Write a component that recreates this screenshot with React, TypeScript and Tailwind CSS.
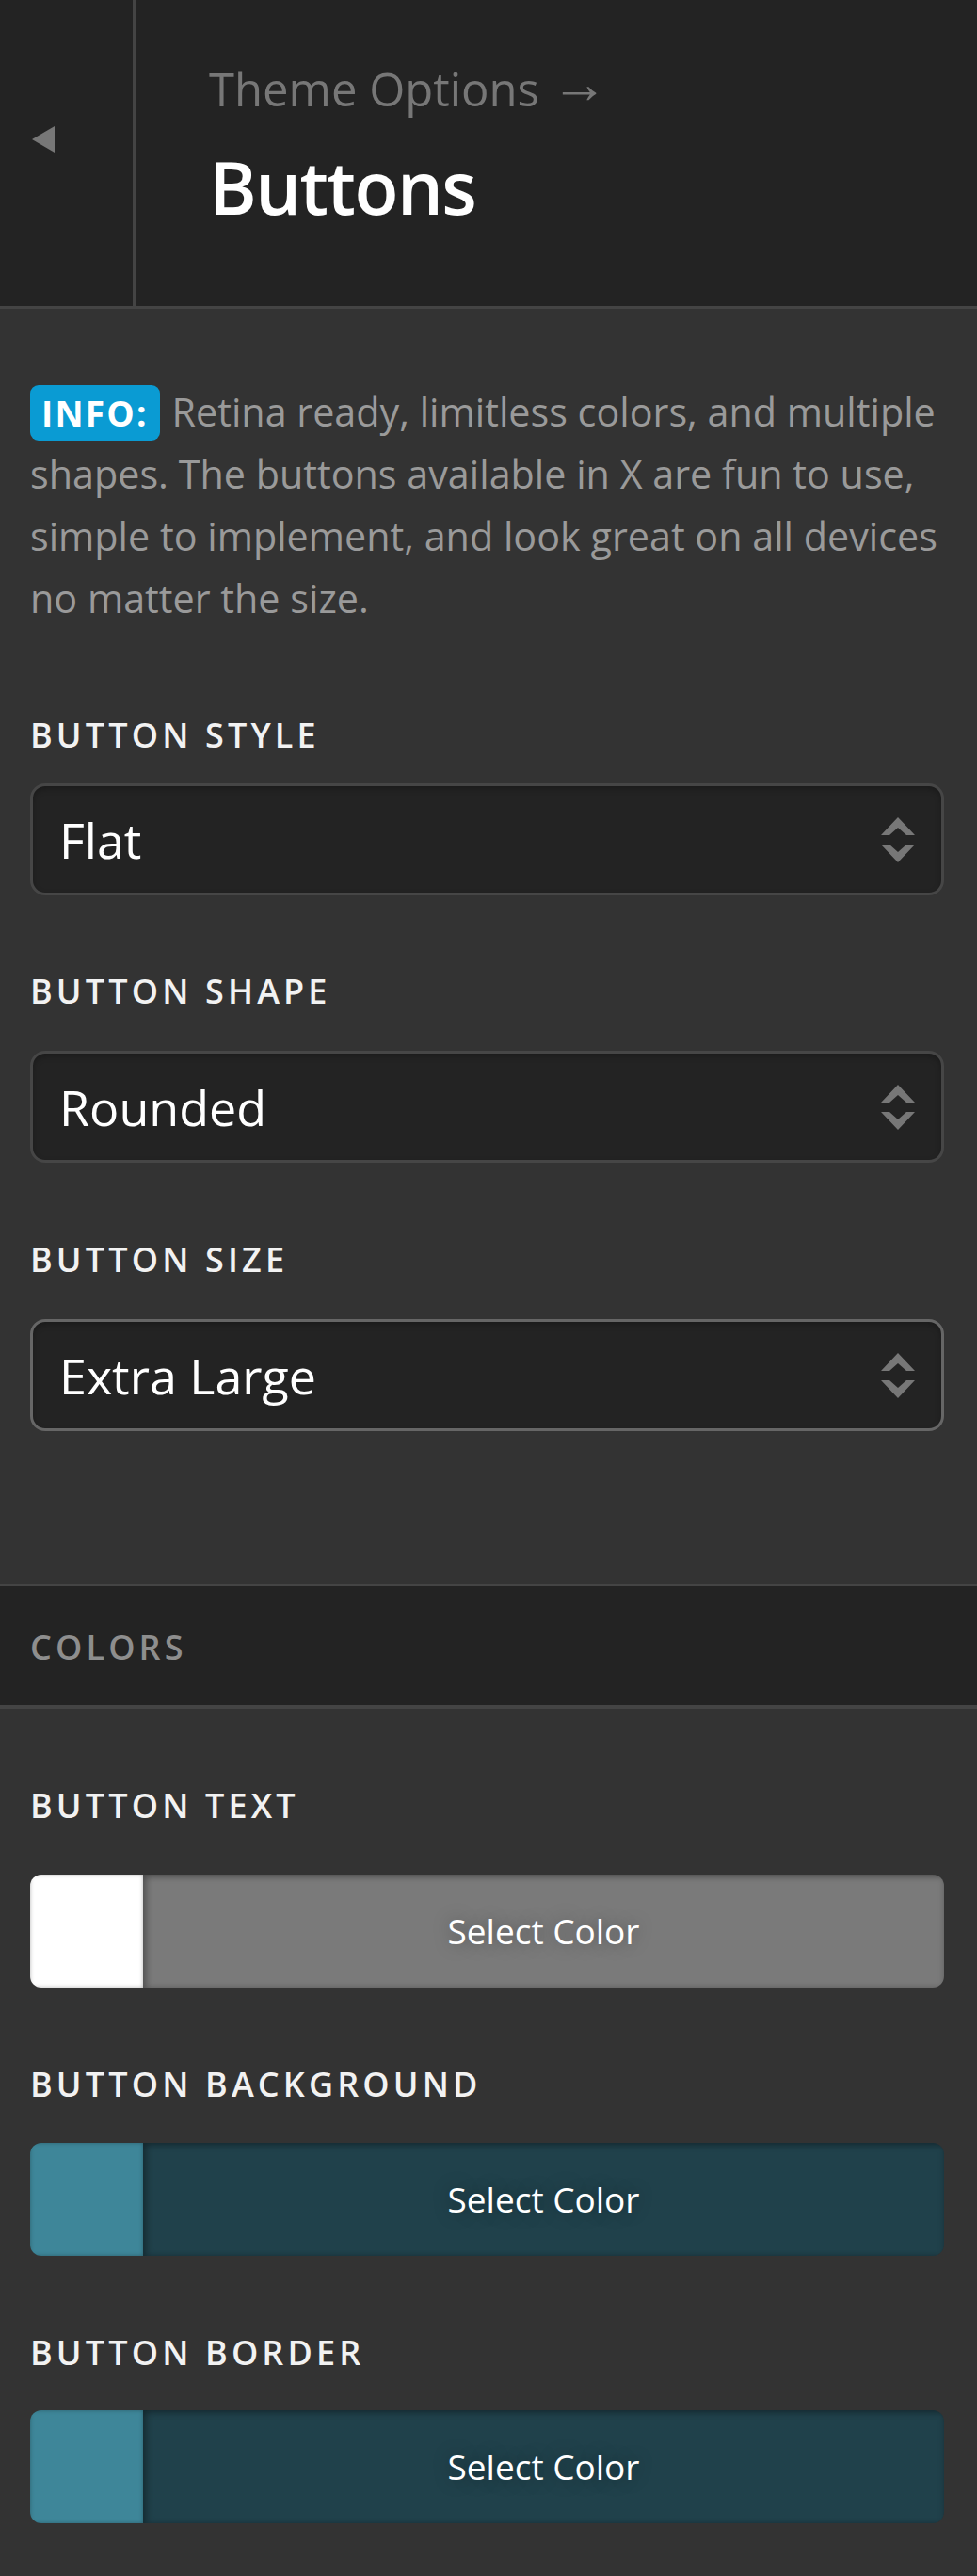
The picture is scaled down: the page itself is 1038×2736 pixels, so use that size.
import React from "react";

const font = { fontFamily: '"Open Sans", "Noto Sans", sans-serif' };

function Chevrons() {
  return (
    <svg width="36" height="48" viewBox="0 0 36 48" className="shrink-0">
      <polygon points="18,0 36,19 27,19 18,11 9,19 0,19" fill="#777777" />
      <polygon points="0,29 9,29 18,37 27,29 36,29 18,48" fill="#777777" />
    </svg>
  );
}

function Label({ children, className = "" }: { children: React.ReactNode; className?: string }) {
  return (
    <div className={`text-[36px] leading-[50px] font-semibold tracking-[0.115em] text-[#f2f2f2] ${className}`}>
      {children}
    </div>
  );
}

function Select({ value, focused = false, className = "" }: { value: string; focused?: boolean; className?: string }) {
  return (
    <div
      className={`flex items-center justify-between h-[119px] rounded-[16px] border-[3px] ${
        focused ? "border-[#666666]" : "border-[#464646]"
      } bg-[#232323] pl-[28px] pr-[28px] shadow-[inset_0_3px_6px_rgba(0,0,0,0.25)] ${className}`}
    >
      <span className="text-[52px] leading-[60px] text-white">{value}</span>
      <Chevrons />
    </div>
  );
}

function Picker({
  swatch,
  bar,
  className = "",
}: {
  swatch: string;
  bar: string;
  className?: string;
}) {
  return (
    <div className={`flex h-[120px] rounded-[12px] overflow-hidden ${className}`}>
      <div className={`w-[120px] ${swatch} shadow-[inset_0_0_4px_rgba(0,0,0,0.3)]`} />
      <div
        className={`flex-1 flex items-center justify-center ${bar} shadow-[inset_0_3px_6px_rgba(0,0,0,0.25),inset_5px_0_6px_rgba(0,0,0,0.2)]`}
      >
        <span className="text-[37px] leading-[50px] text-white [text-shadow:0_0_18px_rgba(0,0,0,0.35)]">
          Select Color
        </span>
      </div>
    </div>
  );
}

export default function App() {
  return (
    <div style={font} className="w-[1038px] min-h-[2736px] bg-[#333333]">
      {/* Header */}
      <div className="flex h-[328px] bg-[#232323] border-b-[3px] border-[#444444]">
        <div className="w-[144px] shrink-0 border-r-[3px] border-[#444444] pl-[34px] pt-[134px]">
          <svg width="24" height="28" viewBox="0 0 24 28">
            <polygon points="24,0 24,28 0,14" fill="#777777" />
          </svg>
        </div>
        <div className="pl-[78px] pt-[64px]">
          <div className="h-[60px] text-[49px] leading-[60px] text-[#777777] whitespace-nowrap">
            Theme Options <span className="text-[60px] leading-[0] align-[4px]">→</span>
          </div>
          <div className="mt-[30px] text-[77px] leading-[90px] font-semibold text-white tracking-[-0.02em]">
            Buttons
          </div>
        </div>
      </div>

      {/* Main section */}
      <div className="pl-8 pr-[35px] pt-[76px] pb-[162px]">
        <p className="text-[41.3px] leading-[66px] text-[#9a9a9a]">
          <span className="inline-block bg-[#0a9bd3] rounded-[9px] px-3 h-[59px] text-[37px] leading-[59px] font-bold tracking-[0.06em] text-white mr-[2px]">
            INFO:
          </span>{" "}
          Retina ready, limitless colors, and multiple shapes. The buttons available in X are fun to use, simple to
          implement, and look great on all devices no matter the size.
        </p>

        <Label className="mt-[88px]">BUTTON STYLE</Label>
        <Select value="Flat" className="mt-[26px]" />

        <Label className="mt-[77px]">BUTTON SHAPE</Label>
        <Select value="Rounded" className="mt-[38px]" />

        <Label className="mt-[78px]">BUTTON SIZE</Label>
        <Select value="Extra Large" focused className="mt-[38px]" />
      </div>

      {/* Colors header */}
      <div className="h-[133px] flex items-center bg-[#232323] border-t-[3px] border-b-[4px] border-[#444444] pl-8">
        <span className="text-[36px] leading-[50px] font-semibold tracking-[0.115em] text-[#8e8e8e] mt-[3px]">
          COLORS
        </span>
      </div>

      {/* Colors section */}
      <div className="pl-8 pr-[35px] pb-[55px]">
        <Label className="pt-[78px]">BUTTON TEXT</Label>
        <Picker swatch="bg-white" bar="bg-[#7a7a7a]" className="mt-[48px]" />

        <Label className="mt-[78px]">BUTTON BACKGROUND</Label>
        <Picker swatch="bg-[#3e8699]" bar="bg-[#20414b]" className="mt-[37px]" />

        <Label className="mt-[78px]">BUTTON BORDER</Label>
        <Picker swatch="bg-[#3e8699]" bar="bg-[#20414b]" className="mt-[36px]" />
      </div>
    </div>
  );
}
